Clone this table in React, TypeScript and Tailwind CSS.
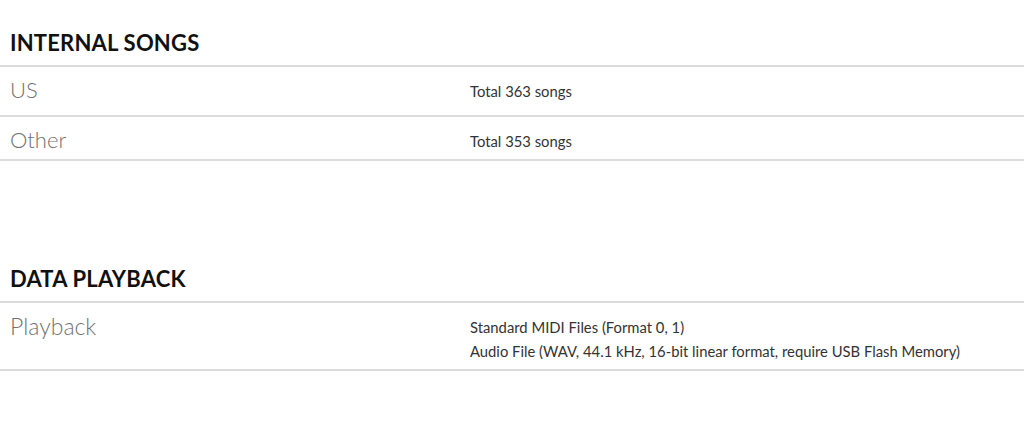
export default function App() {
  const font = { fontFamily: "Lato, 'Open Sans', sans-serif" };
  return (
    <div className="w-[1024px] h-[429px] bg-white overflow-hidden" style={font}>
      <section className="pt-[28px]">
        <h2 className="h-[37px] pl-[10px] text-[22px] leading-[30px] font-bold text-[#111] tracking-[0.2px] border-b-2 border-[#dcdcdc] box-content">
          INTERNAL SONGS
        </h2>
        <div className="flex h-[50px] border-b-2 border-[#dcdcdc]">
          <div className="w-[470px] pl-[10px] pt-[9px] text-[22px] leading-[28px] font-light text-[#727272]">US</div>
          <div className="pt-[12px] text-[14.8px] leading-[24px] text-[#333]">Total 363 songs</div>
        </div>
        <div className="flex h-[44px] border-b-2 border-[#dcdcdc]">
          <div className="w-[470px] pl-[10px] pt-[9px] text-[22px] leading-[28px] font-light text-[#727272]">Other</div>
          <div className="pt-[12px] text-[14.8px] leading-[24px] text-[#333]">Total 353 songs</div>
        </div>
      </section>
      <section className="pt-[103px]">
        <h2 className="h-[37px] pl-[10px] text-[22px] leading-[30px] font-bold text-[#111] tracking-[0.2px] border-b-2 border-[#dcdcdc] box-content">
          DATA PLAYBACK
        </h2>
        <div className="flex h-[68px] border-b-2 border-[#dcdcdc]">
          <div className="w-[470px] pl-[10px] pt-[9px] text-[23px] leading-[28px] font-light text-[#727272]">Playback</div>
          <div className="pt-[12px] text-[14.8px] leading-[24px] text-[#333]">
            <div>Standard MIDI Files (Format 0, 1)</div>
            <div>Audio File (WAV, 44.1 kHz, 16-bit linear format, require USB Flash Memory)</div>
          </div>
        </div>
      </section>
    </div>
  );
}
